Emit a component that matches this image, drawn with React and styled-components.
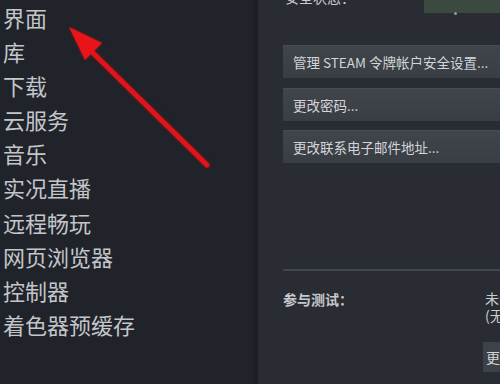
import React from 'react'
import styled, { createGlobalStyle } from 'styled-components'

const GlobalStyle = createGlobalStyle`
  html, body {
    margin: 0;
    padding: 0;
    background: #202329;
    overflow: hidden;
  }
  body {
    font-family: "Noto Sans CJK SC", "Noto Sans", sans-serif;
  }
`

const Page = styled.div`
  position: relative;
  display: flex;
  width: 500px;
  height: 384px;
  overflow: hidden;
`

const Sidebar = styled.ul`
  width: 253px;
  flex: none;
  margin: 0;
  padding: 0 0 0 3px;
  list-style: none;
  background: #202329;
  box-sizing: border-box;
`

const NavItem = styled.li`
  height: 34.1px;
  line-height: 34.1px;
  font-size: 22px;
  color: #c3c6ca;
  white-space: nowrap;
`

const Gutter = styled.div`
  width: 5px;
  flex: none;
  background: #1c1e23;
`

const Panel = styled.div`
  flex: 1;
  min-width: 0;
  display: flex;
  flex-direction: column;
  padding-left: 25px;
  background: #292c33;
  overflow: hidden;
`

const StatusRow = styled.div`
  display: flex;
  align-items: flex-end;
  height: 13px;
  flex: none;
`

const StatusLabel = styled.span`
  width: 147px;
  padding-left: 2px;
  font-size: 14px;
  line-height: 18px;
  margin-bottom: 7px;
  color: #c9cbce;
  white-space: nowrap;
`

const StatusBox = styled.div`
  position: relative;
  width: 80px;
  height: 13px;
  background: #3a4a3e;
`

const StatusDot = styled.span`
  position: absolute;
  left: 30px;
  bottom: -2px;
  width: 3px;
  height: 3px;
  border-radius: 50%;
  background: #8ea08e;
`

const ButtonList = styled.div`
  display: flex;
  flex-direction: column;
  gap: 9.5px;
  margin-top: 32px;
  width: 260px;
`

const ActionButton = styled.div`
  height: 33px;
  display: flex;
  align-items: center;
  padding-left: 10px;
  font-size: 13.5px;
  color: #d3d5d8;
  white-space: nowrap;
  background: linear-gradient(180deg, #40444b 0%, #393d44 100%);
  border-top: 1px solid #474b52;
  box-sizing: border-box;
`

const Divider = styled.div`
  margin-top: 106px;
  height: 2px;
  width: 260px;
  background: #41454d;
`

const BetaRow = styled.div`
  display: flex;
  margin-top: 19px;
`

const BetaLabel = styled.span`
  width: 202px;
  flex: none;
  font-size: 14px;
  font-weight: bold;
  line-height: 18px;
  color: #c6c8cb;
  white-space: nowrap;
`

const BetaInfo = styled.div`
  display: flex;
  flex-direction: column;
  font-size: 14px;
  line-height: 17px;
  color: #c9cbce;
  white-space: nowrap;
`

const BetaButton = styled.div`
  margin-top: 18px;
  margin-left: -2px;
  height: 30px;
  width: 60px;
  display: flex;
  align-items: center;
  padding-left: 3px;
  font-size: 14px;
  color: #d3d5d8;
  background: #3d4148;
`

const Arrow = styled.svg`
  position: absolute;
  left: 0;
  top: 0;
  pointer-events: none;
  filter: drop-shadow(0 0 1.5px rgba(200, 20, 20, 0.6));
`

const navItems = [
  '界面', '库', '下载', '云服务', '音乐',
  '实况直播', '远程畅玩', '网页浏览器', '控制器', '着色器预缓存'
]

const actions = [
  '管理 STEAM 令牌帐户安全设置...',
  '更改密码...',
  '更改联系电子邮件地址...'
]

export default function App () {
  return (
    <Page>
      <GlobalStyle />
      <Sidebar>
        {navItems.map(item => <NavItem key={item}>{item}</NavItem>)}
      </Sidebar>
      <Gutter />
      <Panel>
        <StatusRow>
          <StatusLabel>安全状态：</StatusLabel>
          <StatusBox><StatusDot /></StatusBox>
        </StatusRow>
        <ButtonList>
          {actions.map(a => <ActionButton key={a}>{a}</ActionButton>)}
        </ButtonList>
        <Divider />
        <BetaRow>
          <BetaLabel>参与测试：</BetaLabel>
          <BetaInfo>
            <span>未参与测试</span>
            <span>(无)</span>
            <BetaButton>更改...</BetaButton>
          </BetaInfo>
        </BetaRow>
      </Panel>
      <Arrow width='500' height='384' viewBox='0 0 500 384'>
        <line x1='207' y1='165' x2='90' y2='50' stroke='#e0141a' strokeWidth='5' strokeLinecap='round' />
        <polygon points='69,27 102,43 85,60' fill='#e8141a' />
      </Arrow>
    </Page>
  )
}
